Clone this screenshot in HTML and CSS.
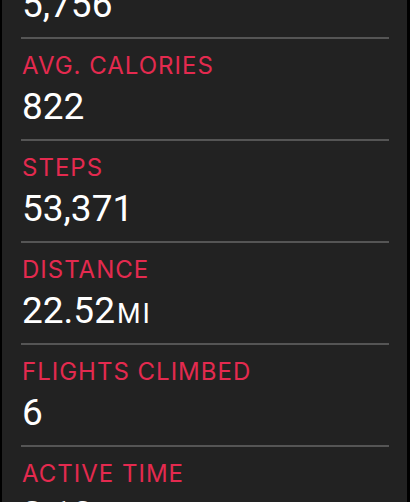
FILE: index.html
```html
<!DOCTYPE html>
<html lang="en">
<head>
    <meta charset="UTF-8">
    <meta name="viewport" content="width=device-width, initial-scale=1.0">
    <title>Weekly Summary</title>
    <link rel="stylesheet" href="styles.css">
</head>
<body>
    <div class="screen">
        <div class="stats">
            <!-- list is scrolled, first row is cut off at the top -->
            <div class="stat">
                <div class="label">TOTAL CALORIES</div>
                <div class="value">5,756</div>
            </div>
            <div class="stat">
                <div class="label">AVG. CALORIES</div>
                <div class="value">822</div>
            </div>
            <div class="stat">
                <div class="label">STEPS</div>
                <div class="value">53,371</div>
            </div>
            <div class="stat">
                <div class="label">DISTANCE</div>
                <div class="value">22.52<span class="unit">MI</span></div>
            </div>
            <div class="stat">
                <div class="label">FLIGHTS CLIMBED</div>
                <div class="value">6</div>
            </div>
            <div class="stat">
                <div class="label">ACTIVE TIME</div>
                <div class="value">2:13</div>
            </div>
        </div>
    </div>
</body>
</html>
```

FILE: styles.css
```css
html, body {
    margin: 0;
    padding: 0;
    background-color: #000;
    height: 100%;
    overflow: hidden;
}
body {
    font-family: Inter, "Noto Sans", sans-serif;
}
.screen {
    margin: 0 3px 0 2px;
    height: 100%;
    background-color: #222;
    overflow: hidden;
}
.stats {
    margin: -63px 18px 0 19px;
}
.stat {
    padding: 12px 0 10px 1px;
    border-bottom: 2px solid #555;
}
.label {
    color: #e42a4f;
    font-size: 24px;
    line-height: 29px;
    letter-spacing: 1px;
}
.value {
    margin-top: 5px;
    color: #fff;
    font-family: Roboto, sans-serif;
    font-size: 37px;
    line-height: 44px;
}
.unit {
    font-size: 27px;
    line-height: 0;
    margin-left: 2px;
    letter-spacing: 2px;
}
```
